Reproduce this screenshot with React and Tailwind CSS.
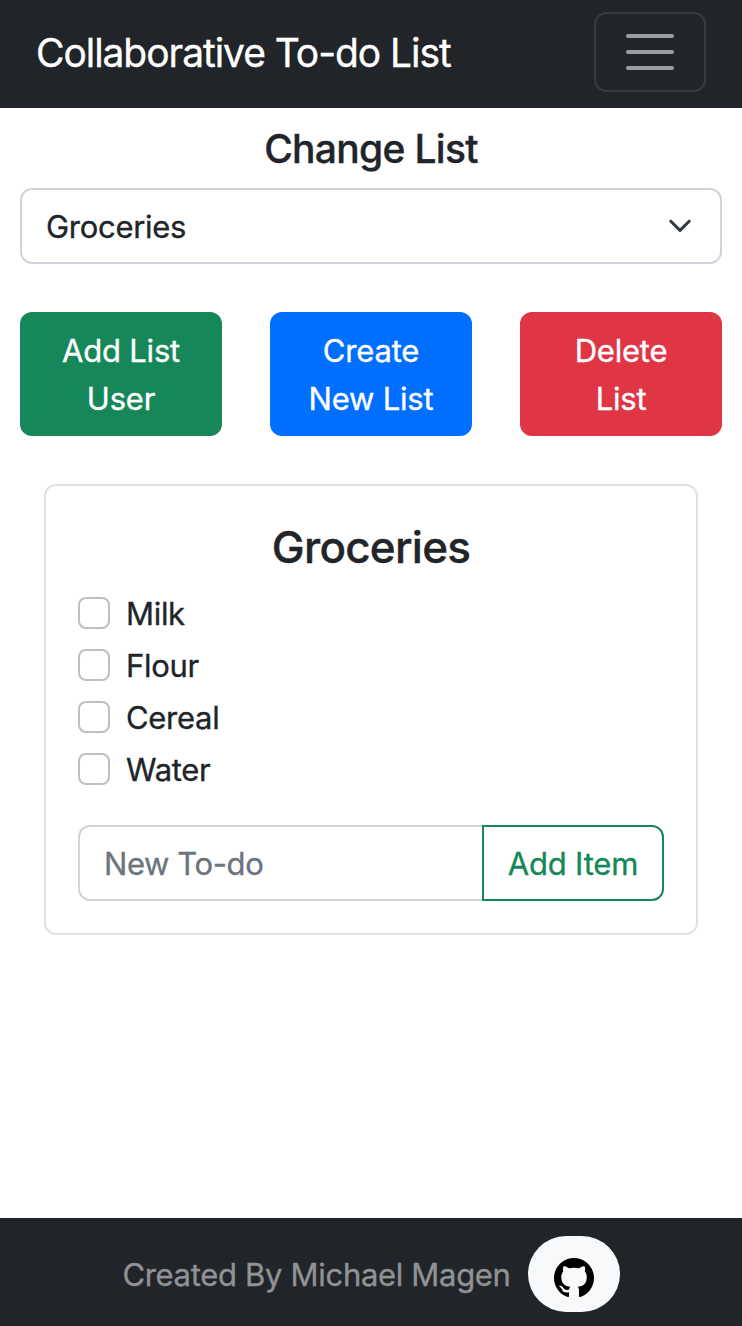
import React from "react";

const TODOS = ["Milk", "Flour", "Cereal", "Water"];

const ACTIONS = [
  { lines: ["Add List", "User"], color: "bg-[#158758]" },
  { lines: ["Create", "New List"], color: "bg-[#006eff]" },
  { lines: ["Delete", "List"], color: "bg-[#df3545]" },
];

function Navbar() {
  return (
    <header className="flex h-[108px] shrink-0 items-center justify-between bg-[#212529] px-9 pb-1">
      <a className="pt-0.5 text-[39px] leading-[60px] tracking-[-1.06px] whitespace-nowrap text-white">Collaborative To-do List</a>
      <button aria-label="Toggle navigation" className="flex h-20 w-28 items-center justify-center rounded-xl border-2 border-white/10">
        <svg className="h-[60px] w-[60px]" viewBox="0 0 30 30" fill="none" stroke="white" strokeOpacity="0.55" strokeWidth="2" strokeLinecap="round">
          <path d="M4 7h22M4 15h22M4 23h22" />
        </svg>
      </button>
    </header>
  );
}

function ListCard() {
  return (
    <section className="mx-6 mt-12 flex h-[451px] flex-col rounded-xl border-2 border-[#dee2e6] px-8 pt-8">
      <h2 className="pb-px text-center text-[44px] leading-[58px] font-medium tracking-[-0.75px]">Groceries</h2>
      <ul className="mt-3 flex flex-col gap-1">
        {TODOS.map((todo) => (
          <li key={todo} className="flex h-12 items-center gap-4">
            <span className="h-8 w-8 rounded-lg border-2 border-[#bfbfbf]" />
            <span className="pt-0.5">{todo}</span>
          </li>
        ))}
      </ul>
      <div className="mt-8 flex h-[76px]">
        <input placeholder="New To-do" className="w-0 flex-1 rounded-l-xl border-2 border-r-0 border-[#ced4da] px-6 pt-0.5 tracking-[-0.4px] placeholder:text-[#6c757d]" />
        <button className="w-[182px] rounded-r-xl border-2 border-[#158758] pt-0.5 tracking-[-0.2px] text-[#158758]">Add Item</button>
      </div>
    </section>
  );
}

export default function App() {
  return (
    <div className="flex h-[1326px] w-[742px] flex-col bg-white font-['Inter',sans-serif] text-[31px] leading-[48px] tracking-[-0.3px] text-[#212529] [-webkit-text-stroke:0.35px_currentColor]">
      <Navbar />
      <main className="flex-1 px-5 pt-[17px]">
        <h1 className="text-center text-[39px] leading-[48px] font-medium tracking-[-0.7px]">Change List</h1>
        <button className="mt-[15px] flex h-[76px] w-full items-center justify-between rounded-xl border-2 border-[#ced4da] px-6">
          <span className="pt-0.5">Groceries</span>
          <svg className="h-8 w-8" viewBox="0 0 16 16" fill="none" stroke="#343a40" strokeWidth="1.5" strokeLinecap="round" strokeLinejoin="round">
            <path d="m3.4 5.6 4.6 4.6L12.6 5.6" />
          </svg>
        </button>
        <div className="mt-12 grid grid-cols-3 gap-12">
          {ACTIONS.map(({ lines, color }) => (
            <button key={lines.join(" ")} className={`flex h-[124px] flex-col items-center justify-center rounded-xl pt-0.5 tracking-[-0.2px] text-white ${color}`}>
              {lines.map((line) => (
                <span key={line}>{line}</span>
              ))}
            </button>
          ))}
        </div>
        <ListCard />
      </main>
      <footer className="flex h-[108px] shrink-0 items-center justify-center gap-[17px] bg-[#212529] pt-1">
        <span className="pt-0.5 tracking-[-0.31px] text-[#909294]">Created By Michael Magen</span>
        <a aria-label="GitHub" className="flex h-[76px] w-[92px] items-center justify-center rounded-full bg-[#f8f9fa] pt-2 text-black">
          <svg className="h-10 w-10" viewBox="0 0 16 16" fill="currentColor">
            <path d="M8 0C3.58 0 0 3.58 0 8c0 3.54 2.29 6.53 5.47 7.59.4.07.55-.17.55-.38 0-.19-.01-.82-.01-1.49-2.01.37-2.53-.49-2.69-.94-.09-.23-.48-.94-.82-1.13-.28-.15-.68-.52-.01-.53.63-.01 1.08.58 1.23.82.72 1.21 1.87.87 2.33.66.07-.52.28-.87.51-1.07-1.78-.2-3.64-.89-3.64-3.95 0-.87.31-1.59.82-2.15-.08-.2-.36-1.02.08-2.12 0 0 .67-.21 2.2.82.64-.18 1.32-.27 2-.27s1.36.09 2 .27c1.53-1.04 2.2-.82 2.2-.82.44 1.1.16 1.92.08 2.12.51.56.82 1.27.82 2.15 0 3.07-1.87 3.75-3.65 3.95.29.25.54.73.54 1.48 0 1.07-.01 1.93-.01 2.2 0 .21.15.46.55.38A8.01 8.01 0 0 0 16 8c0-4.42-3.58-8-8-8" />
          </svg>
        </a>
      </footer>
    </div>
  );
}
